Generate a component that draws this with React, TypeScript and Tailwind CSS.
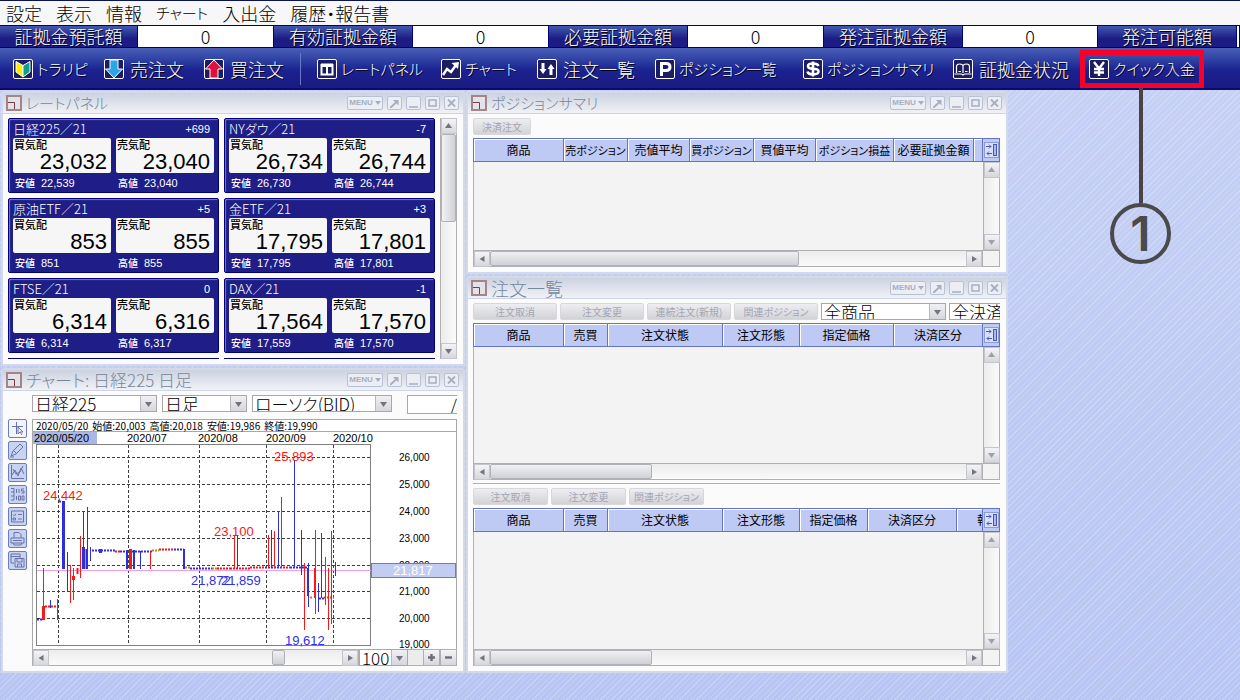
import type { ReactNode } from "react";
import clsx from "clsx";

interface Rate {
  name: string;
  diff: string;
  bid: string;
  ask: string;
  low: string;
  high: string;
}

interface Column {
  label: string;
  width: string;
  small?: boolean;
}

interface Bar {
  x: number;
  y1: number;
  y2: number;
  up: boolean;
  w?: number;
}

const menus = ["設定", "表示", "情報", "チャート", "入出金", "履歴・報告書"];

const balances = [
  { label: "証拠金預託額", value: "0" },
  { label: "有効証拠金額", value: "0" },
  { label: "必要証拠金額", value: "0" },
  { label: "発注証拠金額", value: "0" },
  { label: "発注可能額", value: "" },
];

const rates: Rate[] = [
  { name: "日経225／21", diff: "+699", bid: "23,032", ask: "23,040", low: "22,539", high: "23,040" },
  { name: "NYダウ／21", diff: "-7", bid: "26,734", ask: "26,744", low: "26,730", high: "26,744" },
  { name: "原油ETF／21", diff: "+5", bid: "853", ask: "855", low: "851", high: "855" },
  { name: "金ETF／21", diff: "+3", bid: "17,795", ask: "17,801", low: "17,795", high: "17,801" },
  { name: "FTSE／21", diff: "0", bid: "6,314", ask: "6,316", low: "6,314", high: "6,317" },
  { name: "DAX／21", diff: "-1", bid: "17,564", ask: "17,570", low: "17,559", high: "17,570" },
];

const positionColumns: Column[] = [
  { label: "商品", width: "w-[90px]" },
  { label: "売ポジション", width: "w-16", small: true },
  { label: "売値平均", width: "w-[62px]" },
  { label: "買ポジション", width: "w-16", small: true },
  { label: "買値平均", width: "w-[62px]" },
  { label: "ポジション損益", width: "w-[78px]", small: true },
  { label: "必要証拠金額", width: "w-20" },
  { label: "", width: "w-auto" },
];

const orderColumns: Column[] = [
  { label: "商品", width: "w-[90px]" },
  { label: "売買", width: "w-11" },
  { label: "注文状態", width: "w-[115px]" },
  { label: "注文形態", width: "w-[77px]" },
  { label: "指定価格", width: "w-[94px]" },
  { label: "決済区分", width: "w-auto" },
];

const relatedColumns: Column[] = [
  { label: "商品", width: "w-[90px]" },
  { label: "売買", width: "w-11" },
  { label: "注文状態", width: "w-[115px]" },
  { label: "注文形態", width: "w-[77px]" },
  { label: "指定価格", width: "w-[68px]" },
  { label: "決済区分", width: "w-[89px]" },
  { label: "報", width: "w-auto" },
];

const bars: Bar[] = [
  { x: 43.5, y1: 568, y2: 620, up: true },
  { x: 43.5, y1: 606, y2: 620, up: true, w: 3 },
  { x: 50.5, y1: 600, y2: 608, up: false },
  { x: 57.5, y1: 599, y2: 620, up: true },
  { x: 63.5, y1: 501, y2: 569, up: false, w: 3 },
  { x: 67.5, y1: 552, y2: 592, up: false },
  { x: 70.5, y1: 565, y2: 603, up: true },
  { x: 73.5, y1: 568, y2: 600, up: true },
  { x: 73.5, y1: 576, y2: 580, up: true, w: 3 },
  { x: 77.5, y1: 568, y2: 574, up: true, w: 2 },
  { x: 80.5, y1: 536, y2: 578, up: true },
  { x: 83.5, y1: 511, y2: 569, up: false },
  { x: 83.5, y1: 547, y2: 569, up: false, w: 3 },
  { x: 87.5, y1: 507, y2: 569, up: false },
  { x: 86.5, y1: 549, y2: 569, up: false, w: 2 },
  { x: 90.5, y1: 547, y2: 561, up: false },
  { x: 100.5, y1: 549, y2: 553, up: false, w: 3 },
  { x: 127, y1: 550, y2: 569, up: false, w: 2 },
  { x: 130.5, y1: 549, y2: 569, up: true, w: 3 },
  { x: 134, y1: 550, y2: 569, up: false, w: 2 },
  { x: 140.5, y1: 551, y2: 569, up: false },
  { x: 150.5, y1: 551, y2: 569, up: true },
  { x: 184, y1: 549, y2: 569, up: false, w: 2 },
  { x: 234.5, y1: 536, y2: 569, up: true },
  { x: 237.5, y1: 536, y2: 569, up: false },
  { x: 268.5, y1: 535, y2: 568, up: true },
  { x: 271.5, y1: 530, y2: 568, up: false },
  { x: 274.5, y1: 531, y2: 568, up: true },
  { x: 278.5, y1: 511, y2: 568, up: false },
  { x: 281.5, y1: 497, y2: 568, up: true },
  { x: 294.5, y1: 460, y2: 568, up: false },
  { x: 301.5, y1: 530, y2: 575, up: false },
  { x: 304.5, y1: 563, y2: 630, up: true },
  { x: 308.5, y1: 563, y2: 607, up: false },
  { x: 308, y1: 568, y2: 596, up: false, w: 2 },
  { x: 315.5, y1: 530, y2: 614, up: true },
  { x: 315, y1: 568, y2: 598, up: true, w: 2 },
  { x: 318.5, y1: 583, y2: 612, up: false },
  { x: 321.5, y1: 533, y2: 598, up: false },
  { x: 325.5, y1: 557, y2: 605, up: true },
  { x: 328.5, y1: 568, y2: 630, up: true },
  { x: 331.5, y1: 531, y2: 624, up: true },
  { x: 335.5, y1: 562, y2: 576, up: false },
];

// flat stretches, drawn as rows of short ticks
const flats = [
  { x1: 37, x2: 43, y: 619.5, c: "#2f2fd8" },
  { x1: 45, x2: 58, y: 606.5, c: "#f81818" },
  { x1: 59, x2: 62, y: 501.5, c: "#2f2fd8" },
  { x1: 92, x2: 115, y: 550.5, c: "#2f2fd8" },
  { x1: 115, x2: 120, y: 551.5, c: "#f81818" },
  { x1: 120, x2: 152, y: 551.5, c: "#2f2fd8" },
  { x1: 152, x2: 159, y: 550.5, c: "#b08a10" },
  { x1: 159, x2: 174, y: 549.5, c: "#f81818" },
  { x1: 174, x2: 184, y: 549.5, c: "#2f2fd8" },
  { x1: 185, x2: 190, y: 567.5, c: "#b08a10" },
  { x1: 190, x2: 212, y: 568.5, c: "#2f2fd8" },
  { x1: 212, x2: 219, y: 568.5, c: "#b08a10" },
  { x1: 217, x2: 230, y: 568.5, c: "#f81818" },
  { x1: 230, x2: 250, y: 568.5, c: "#f81818" },
  { x1: 250, x2: 265, y: 567.5, c: "#f81818" },
  { x1: 265, x2: 283, y: 567.5, c: "#2f2fd8" },
  { x1: 283, x2: 290, y: 567.5, c: "#f81818" },
  { x1: 290, x2: 308, y: 567.5, c: "#2f2fd8" },
  { x1: 310, x2: 313, y: 597.5, c: "#b08a10" },
  { x1: 319, x2: 324, y: 598.5, c: "#2f2fd8" },
  { x1: 324, x2: 334, y: 597.5, c: "#f81818" },
];

const gridX = [58.5, 128.5, 199.5, 266.5, 333.5];
const gridY = [457.5, 484.5, 511.5, 538.5, 565.5, 591.5, 618.5];
const prices = ["26,000", "25,000", "24,000", "23,000", "22,000", "21,000", "20,000"];
const months = [
  { x: 127, label: "2020/07" },
  { x: 198, label: "2020/08" },
  { x: 266, label: "2020/09" },
  { x: 333, label: "2020/10" },
];

/* ---------- toolbar ---------- */

const ToolbarIcon = ({ children }: { children: ReactNode }) => (
  <svg width="20" height="20" viewBox="0 0 20 20" className="shrink-0" aria-hidden="true">
    <rect x="0.5" y="0.5" width="19" height="19" rx="1.5" fill="#1c1c60" stroke="#fff" />
    {children}
  </svg>
);

const toolbar: { label: string; width: string; small?: boolean; icon: ReactNode }[] = [
  {
    label: "トラリピ",
    width: "w-[91px]",
    small: true,
    icon: (
      <>
        <path d="M3 2.5 L10 6.5 V18 L3 13 Z" fill="#ffee00" stroke="#fff" />
        <path d="M17 2.5 L10 6.5 V18 L17 13 Z" fill="#0aa08c" stroke="#fff" />
      </>
    ),
  },
  {
    label: "売注文",
    width: "w-[100px]",
    icon: <path d="M6 1 H14 V10 H18.5 L10 19 L1.5 10 H6 Z" fill="#2ca4e8" stroke="#fff" />,
  },
  {
    label: "買注文",
    width: "w-24",
    icon: <path d="M6 19 V10 H1.5 L10 1 L18.5 10 H14 V19 Z" fill="#e0103c" stroke="#fff" />,
  },
  {
    label: "レートパネル",
    width: "w-[124px]",
    small: true,
    icon: <path d="M4 5.5 H16 M4.5 5 V15.500 H15.500 V5 M4 7 H16 M10 7 V15" fill="none" stroke="#fff" strokeWidth="2" />,
  },
  {
    label: "チャート",
    width: "w-24",
    small: true,
    icon: (
      <>
        <path d="M2 16 L6 10 L10 13 L15 6" fill="none" stroke="#fff" strokeWidth="2.5" />
        <path d="M10.5 4 L18 3 L17 10 Z" fill="#fff" />
      </>
    ),
  },
  {
    label: "注文一覧",
    width: "w-[118px]",
    icon: (
      <path
        d="M4.5 4 H7.5 V10 H9.5 L6 15 L2.5 10 H4.5 Z M12.5 16 V10 H10.5 L14 5 L17.5 10 H15.5 V16 Z"
        fill="#fff"
      />
    ),
  },
  {
    label: "ポジション一覧",
    width: "w-[148px]",
    small: true,
    icon: <path d="M6.5 17 V4.5 H11 Q15 4.5 15 8 Q15 11.5 11 11.5 H6.5" fill="none" stroke="#fff" strokeWidth="3" />,
  },
  {
    label: "ポジションサマリ",
    width: "w-[150px]",
    small: true,
    icon: (
      <path
        d="M15.5 7 Q14.5 4.5 10 4.5 Q5 4.5 5 7 Q5 9.5 10 9.8 Q15.5 10 15.5 12.5 Q15.5 15.3 10 15.3 Q5 15.3 4.5 12.5 M10 2.5 V17.5"
        fill="none"
        stroke="#fff"
        strokeWidth="2.6"
      />
    ),
  },
  {
    label: "証拠金状況",
    width: "w-[127px]",
    icon: (
      <path
        d="M3.500 14 V7.500 Q3.500 5 6.500 5 Q10 5 10 7.500 V14 M10 7.500 Q10 5 13.500 5 Q16.500 5 16.500 7.500 V14 M1.500 15 H8.500 L10 16 L11.500 15 H18.500 M5.500 12.500 H8 M12 12.500 H14.500"
        fill="none"
        stroke="#fff"
        strokeWidth="1.2"
      />
    ),
  },
];

const labelShadow = "[text-shadow:1px_1px_0_#000]";

const ToolbarButton = ({ label, width, small, icon }: (typeof toolbar)[number]) => (
  <button
    type="button"
    className={clsx("flex shrink-0 items-center whitespace-nowrap text-white", labelShadow, width, small ? "gap-1 text-[15px]" : "gap-1.5 text-lg")}
  >
    <ToolbarIcon>{icon}</ToolbarIcon>
    {label}
  </button>
);

const Toolbar = () => (
  <nav className="flex h-[42px] items-center border-b-2 border-[#0a0a6a] bg-linear-to-b from-[#4a5fb8] via-[#1c2290] via-55% to-[#1a1a82] pt-0.5 pl-[13px]">
    {toolbar.slice(0, 3).map((item) => (
      <ToolbarButton key={item.label} {...item} />
    ))}
    <span className="mr-4 h-8 w-px shrink-0 bg-[#6878c8]" />
    {toolbar.slice(3).map((item) => (
      <ToolbarButton key={item.label} {...item} />
    ))}
    <div className="relative z-10 h-[38px] w-[124px] shrink-0 border-[5px] border-[#f80028]">
      <button type="button" className={clsx("flex h-full items-center gap-1 pl-1 text-[15px] whitespace-nowrap text-white", labelShadow)}>
        <ToolbarIcon>
          <path d="M5 3 L10 9.500 L15 3 M10 9 V17 M5 10 H15 M5 13.500 H15" fill="none" stroke="#fff" strokeWidth="2.4" />
        </ToolbarIcon>
        クイック入金
      </button>
      {/* numbered callout hanging from the deposit button */}
      <div className="absolute top-full left-[25px] flex flex-col items-center pt-[5px]">
        <span className="h-[115px] w-1 bg-[#4a4245]" />
        <span className="flex size-[61px] items-center justify-center rounded-full border-4 border-[#4a4a4a] font-['Inter',sans-serif] text-5xl font-semibold text-[#4a4a4a]">
          1
        </span>
      </div>
    </div>
  </nav>
);

/* ---------- small controls ---------- */

const arrows = {
  up: "M1 6 L4.500 1 L8 6 Z",
  down: "M1 2 L4.500 7 L8 2 Z",
  left: "M6.500 1 L1.500 4 L6.500 7 Z",
  right: "M2 1 L7 4 L2 7 Z",
};

const ArrowButton = ({ dir, dim }: { dir: keyof typeof arrows; dim?: boolean }) => (
  <button
    type="button"
    aria-label={dir}
    className="flex size-4 shrink-0 items-center justify-center border border-[#c4c6cc] bg-linear-to-b from-[#f4f4f8] to-[#d6d7dc]"
  >
    <svg width="9" height="8" viewBox="0 0 9 8" aria-hidden="true">
      <path d={arrows[dir]} fill={dim ? "#a0a0a8" : "#74747e"} />
    </svg>
  </button>
);

const VScroll = ({ thumb, dim }: { thumb?: string; dim?: boolean }) => (
  <div className="flex h-full w-[17px] shrink-0 flex-col items-center border-x border-[#b0b0b0] bg-linear-to-r from-[#ececec] to-[#fafafa]">
    <ArrowButton dir="up" dim={dim} />
    <div className="min-h-0 w-full flex-1">
      {thumb && <div className={clsx("w-full rounded-xs border border-[#b0b2b8] bg-linear-to-r from-[#f2f2f6] to-[#d0d1d6]", thumb)} />}
    </div>
    <ArrowButton dir="down" dim={dim} />
  </div>
);

const HScroll = ({ thumb }: { thumb: string }) => (
  <div className="flex h-[17px] min-w-0 flex-1 items-center border border-[#b0b0b0] bg-linear-to-b from-[#ececec] to-[#fafafa]">
    <ArrowButton dir="left" />
    <div className="h-full min-w-0 flex-1">
      <div className={clsx("h-full rounded-xs border border-[#b0b2b8] bg-linear-to-b from-[#f0f0f4] to-[#d0d1d6]", thumb)} />
    </div>
    <ArrowButton dir="right" />
  </div>
);

const Dropdown = ({ label, value, width }: { label: string; value: string; width: string }) => (
  <div className={clsx("flex h-[17px] shrink-0 items-center border border-[#a8a8a8] bg-white", width)}>
    <div className="relative flex h-full w-full">
      <select aria-label={label} className="h-full w-full appearance-none pl-0.5 text-[17px] leading-[15px] outline-none">
        <option>{value}</option>
      </select>
      <span className="pointer-events-none absolute inset-y-0 right-0 flex w-4 items-center justify-center border-l border-[#b8bac0] bg-linear-to-b from-[#f0f0f4] to-[#d6d7dc]">
        <svg width="9" height="8" viewBox="0 0 9 8" aria-hidden="true">
          <path d={arrows.down} fill="#74747e" />
        </svg>
      </span>
    </div>
  </div>
);

const ActionButton = ({ label, width }: { label: string; width: string }) => (
  <button
    type="button"
    disabled
    className={clsx(
      "flex h-[17px] shrink-0 items-center justify-center rounded-xs border border-[#d8d8dc] bg-linear-to-b from-[#eeeef2] to-[#d2d3d7] text-[10px] font-normal whitespace-nowrap text-[#a4a5b4]",
      width,
    )}
  >
    {label}
  </button>
);

/* ---------- window frame ---------- */

const frameButton = "flex h-3.5 w-[15px] items-center justify-center rounded-xs border border-[#b8c2d4] bg-[#eceef4]";

const Panel = ({ title, titleSize, children }: { title: string; titleSize: string; children: ReactNode }) => (
  <section className="rounded-t border-2 border-[#d3d9e8] bg-[#fbfbfb]">
    <header className="flex h-[21px] items-center border-b border-[#cdd4e4] bg-linear-to-b from-[#ccd2e0] to-[#f1f2f7] pr-1 pl-[3px]">
      <svg width="16" height="16" viewBox="0 0 16 16" className="mr-1 shrink-0" aria-hidden="true">
        <rect x="1" y="1" width="14" height="14" fill="#e4e2e8" stroke="#a08688" strokeWidth="2" />
        <path d="M2 7.500 H8.500 V14" fill="none" stroke="#7a3c40" />
      </svg>
      <h2 className={clsx("flex-1 leading-5 whitespace-nowrap text-[#76879c]", titleSize)}>{title}</h2>
      <div className="flex gap-1 text-[#a4afc2]">
        <button type="button" className="flex h-3.5 w-9 items-center justify-center gap-0.5 rounded-xs border border-[#b8c2d4] bg-[#eceef4] font-['Liberation_Sans',sans-serif] text-[8px] font-bold">
          MENU
          <svg width="6" height="4" viewBox="0 0 6 4" aria-hidden="true">
            <path d="M0 0 H6 L3 4 Z" fill="currentColor" />
          </svg>
        </button>
        <button type="button" aria-label="切り離す" className={frameButton}>
          <svg width="9" height="9" viewBox="0 0 9 9" aria-hidden="true">
            <path d="M0 9 L6 3.500" stroke="currentColor" strokeWidth="2" />
            <path d="M3 1 H8.500 V6.500 Z" fill="currentColor" />
          </svg>
        </button>
        <button type="button" aria-label="最小化" className={frameButton}>
          <svg width="9" height="9" viewBox="0 0 9 9" aria-hidden="true">
            <path d="M0 8 H9" stroke="currentColor" strokeWidth="1.5" />
          </svg>
        </button>
        <button type="button" aria-label="最大化" className={frameButton}>
          <svg width="9" height="8" viewBox="0 0 9 8" aria-hidden="true">
            <rect x="1" y="1" width="7" height="6" fill="none" stroke="currentColor" strokeWidth="1.5" />
          </svg>
        </button>
        <button type="button" aria-label="閉じる" className={frameButton}>
          <svg width="9" height="8" viewBox="0 0 9 8" aria-hidden="true">
            <path d="M1 0.500 L8 7.500 M8 0.500 L1 7.500" stroke="currentColor" strokeWidth="1.8" />
          </svg>
        </button>
      </div>
    </header>
    <div className="pt-1 pr-1.5 pb-[5px] pl-[5px]">{children}</div>
  </section>
);

/* ---------- rate panel ---------- */

const Quote = ({ label, value, foot, footValue }: { label: string; value: string; foot: string; footValue: string }) => (
  <div className="min-w-0 flex-1">
    <div className="h-[35px] rounded-xs bg-[#f6f6f6] pr-1 pl-px text-black">
      <div className="h-3 text-[11px] leading-3 font-medium">{label}</div>
      <div className="text-right font-['Liberation_Sans',sans-serif] text-[22px] leading-6">{value}</div>
    </div>
    <div className="flex gap-1.5 pt-1 pl-0.5 leading-3">
      <span className="text-[10px] font-medium">{foot}</span>
      <span className="font-['Liberation_Sans',sans-serif] text-[11px]">{footValue}</span>
    </div>
  </div>
);

const RateCard = ({ rate }: { rate: Rate }) => (
  <article className="h-[75px] rounded-xs border border-[#00007c] bg-[#1e1e86] px-1 text-white shadow-[inset_1px_1px_1px_#7c7cb8]">
    <div className="flex h-[19px] items-center justify-between pr-1 leading-4">
      <h3 className="text-[13px]">{rate.name}</h3>
      <span className="font-['Liberation_Sans',sans-serif] text-[11px]">{rate.diff}</span>
    </div>
    <div className="flex gap-[5px]">
      <Quote label="買気配" value={rate.bid} foot="安値" footValue={rate.low} />
      <Quote label="売気配" value={rate.ask} foot="高値" footValue={rate.high} />
    </div>
  </article>
);

const RatePanel = () => (
  <Panel title="レートパネル" titleSize="text-[15px]">
    <div className="flex h-[241px] gap-[5px]">
      <div className="grid min-w-0 flex-1 auto-rows-max grid-cols-2 gap-[5px] overflow-hidden">
        {rates.map((rate) => (
          <RateCard key={rate.name} rate={rate} />
        ))}
        <div className="h-px bg-[#00007c]" />
        <div className="h-px bg-[#00007c]" />
      </div>
      <VScroll thumb="h-[88px]" />
    </div>
  </Panel>
);

/* ---------- chart ---------- */

const Chart = () => (
  <svg viewBox="33 432 423 217" className="block w-full" role="img" aria-label="日経225 日足チャート">
    <rect x="33" y="432" width="64" height="12" fill="#a9b7e6" />
    <g fontFamily="Liberation Sans, sans-serif" fontSize="11">
      <text x="34" y="442">2020/05/20</text>
      {months.map((m) => (
        <text key={m.label} x={m.x} y="442">{m.label}</text>
      ))}
    </g>
    <rect x="36.500" y="444.500" width="334" height="201" fill="#fff" stroke="#808080" />
    <g stroke="#404040" strokeDasharray="3 2">
      {gridY.map((y) => (
        <line key={y} x1="37" x2="370" y1={y} y2={y} />
      ))}
      {gridX.map((x) => (
        <line key={x} x1={x} x2={x} y1="445" y2="645" />
      ))}
    </g>
    <line x1="37" x2="371" y1="570.500" y2="570.500" stroke="#f0a0e8" />
    {flats.map((f) => (
      <line key={f.x1} x1={f.x1} x2={f.x2} y1={f.y} y2={f.y} stroke={f.c} strokeWidth="2" strokeDasharray="2 1" />
    ))}
    {bars.map((b, i) => (
      <line key={i} x1={b.x} x2={b.x} y1={b.y1} y2={b.y2} stroke={b.up ? "#f81818" : "#2f2fd8"} strokeWidth={b.w ?? 1} />
    ))}
    <g fontFamily="Liberation Sans, sans-serif" fontSize="10">
      {prices.map((p, i) => (
        <text key={p} x="399" y={gridY[i] + 3}>{p}</text>
      ))}
      <text x="399" y="648">19,000</text>
    </g>
    <rect x="371.500" y="563.500" width="84" height="14" fill="#c3cdf2" stroke="#6a7cc4" />
    <g fontFamily="Liberation Sans, sans-serif" fontSize="13">
      <text x="393" y="575" fill="#fff">21,817</text>
      <g fill="#f81818">
        <text x="43" y="500">24,442</text>
        <text x="214" y="536">23,100</text>
        <text x="274" y="461">25,893</text>
      </g>
      <g fill="#3030e8">
        <text x="191" y="585">21,872</text>
        <text x="221" y="585">21,859</text>
        <text x="285" y="645">19,612</text>
      </g>
    </g>
  </svg>
);

const chartTools = [
  { label: "カーソル", path: "M4 7.500 H15 M8.500 3 V15 M10 8 V15 L12 13 L14 16 M10 8 L15 13 H12" },
  { label: "描画", path: "M3 15 L5 10 L12 3 L15 6 L8 13 Z M6 10 L9 13 M2 16 H6" },
  { label: "指標", path: "M3.500 2 V15.500 H16 M4 12 L7 7 L10 13 L13 5 L16 11 M5 6 L8 11 L12 9 L15 3" },
  { label: "価格", path: "M3 3.500 H6 V15 H3 M3 7 H6 M3 11 H6 M8.500 4 V8 M11 4 V8 M16 4 H13.500 V6 H16 V8 H13.500 M8.500 11 V15 M10.500 11 H12.500 V15 H10.500 Z M14 11 H16 V15 H14 Z" },
  { label: "設定", path: "M3.500 4 H15.500 V15 H3.500 Z M5 7.500 L6.500 9 L8 6.500 M10 7.500 H14 M5 11 H7.500 V13 H5 Z M10 12 H14" },
  { label: "印刷", path: "M6 9 V3.500 H11 L13 5.500 V9 M3 9 H16 V14 H3 Z M5 14 L6 16 H13 L14 14 M5 11.500 H14" },
  { label: "保存", path: "M3 3 H12 V7 M3 3 V12 H6 M3 5.500 H12 M7 7.500 H16 V16 H7 Z M9 8 V11 H14 V8 M9.500 16 V13 H13.500 V16" },
];

const ChartPanel = () => (
  <Panel title="チャート: 日経225 日足" titleSize="text-[17px]">
    <div className="flex items-start gap-[5px] pl-6">
      <Dropdown label="商品" value="日経225" width="w-[125px]" />
      <Dropdown label="足種" value="日足" width="w-[85px]" />
      <Dropdown label="チャート種類" value="ローソク(BID)" width="w-[140px]" />
      <input
        aria-label="日付"
        defaultValue="/"
        className="ml-2.5 h-[19px] w-12 min-w-0 flex-1 border border-r-0 border-[#a8a8a8] bg-white text-right text-[17px] leading-4 outline-none"
      />
    </div>
    <div className="flex gap-[5px] pt-[5px]">
      <div className="flex flex-col gap-[3px]">
        {chartTools.map((tool, i) => (
          <button
            key={tool.label}
            type="button"
            aria-label={tool.label}
            className={clsx("size-[19px] rounded-xs border border-[#6c7cc4]", i === 0 ? "bg-[#f4f5fa]" : "bg-[#c8d2f2]")}
          >
            <svg width="17" height="17" viewBox="1 1 17 17" aria-hidden="true">
              <path d={tool.path} fill="none" stroke="#6874a8" />
            </svg>
          </button>
        ))}
      </div>
      <div className="min-w-0 flex-1">
        <div className="border border-b-0 border-[#a8a8a8] bg-white">
          <p className="flex h-3 gap-1 border-b border-[#a8a8a8] pl-[3px] text-[10px] leading-[11px] font-normal whitespace-nowrap">
            <span>2020/05/20</span>
            <span>始値:20,003</span>
            <span>高値:20,018</span>
            <span>安値:19,986</span>
            <span>終値:19,990</span>
          </p>
          <Chart />
        </div>
        <div className="flex h-[17px]">
          <HScroll thumb="ml-[76%] w-[13px]" />
          <Dropdown label="本数" value="100" width="w-[49px]" />
          <span className="w-[15px] border-y border-[#b0b0b0] bg-[#ececec]" />
          <button type="button" aria-label="拡大" className="flex w-[17px] items-center justify-center border border-[#b0b0b0] bg-linear-to-b from-[#f4f4f8] to-[#d6d7dc]">
            <svg width="7" height="7" viewBox="0 0 7 7" aria-hidden="true">
              <path d="M3.500 0 V7 M0 3.500 H7" stroke="#6c6c78" strokeWidth="2.4" />
            </svg>
          </button>
          <button type="button" aria-label="縮小" className="flex w-[17px] items-center justify-center border border-[#b0b0b0] bg-linear-to-b from-[#f4f4f8] to-[#d6d7dc]">
            <svg width="7" height="7" viewBox="0 0 7 7" aria-hidden="true">
              <path d="M0 3.500 H7" stroke="#6c6c78" strokeWidth="2.4" />
            </svg>
          </button>
        </div>
      </div>
    </div>
  </Panel>
);

/* ---------- order tables ---------- */

const DataTable = ({ columns, height, thumb, label }: { columns: Column[]; height: string; thumb: string; label: string }) => (
  <div className="grid grid-cols-[minmax(0,1fr)_17px] bg-[#f3f3f3]">
    <table aria-label={label} className="h-6 w-full table-fixed border-collapse border border-[#6474c4] bg-[#bec9f4]">
      <thead>
        <tr>
          {columns.map((col, i) => (
            <th
              key={i}
              scope="col"
              className={clsx(
                "border border-[#6474c4] p-0 leading-5 font-normal whitespace-nowrap shadow-[inset_1px_1px_0_#fff]",
                col.width,
                col.small ? "text-[11px]" : "text-xs",
                col.label === "報" && "overflow-hidden pl-5 text-left",
              )}
            >
              {col.label}
            </th>
          ))}
        </tr>
      </thead>
    </table>
    <button type="button" aria-label="列の設定" className="flex h-6 items-center justify-center border border-l-0 border-[#6474c4] bg-[#bec9f4]">
      <svg width="15" height="16" viewBox="0 0 15 16" aria-hidden="true">
        <rect x="0.500" y="0.500" width="14" height="15" fill="#d8e0fa" stroke="#8c9ad8" />
        <path d="M2 4.500 H7 M5 2.500 L7 4.500 L5 6.500 M8 11.500 H3 M5 9.500 L3 11.500 L5 13.500" fill="none" stroke="#4858b8" />
        <rect x="9.500" y="2.500" width="3" height="11" fill="#aab8ec" stroke="#4858b8" />
      </svg>
    </button>
    <div className={clsx("border-l border-[#b0b0b0]", height)} />
    <VScroll dim />
    <div className="flex">
      <HScroll thumb={thumb} />
    </div>
    <div className="border border-l-0 border-[#b0b0b0]" />
  </div>
);

const PositionPanel = () => (
  <Panel title="ポジションサマリ" titleSize="text-[15px]">
    <div className="pb-[3px]">
      <ActionButton label="決済注文" width="w-[58px]" />
    </div>
    <DataTable label="ポジションサマリ" columns={positionColumns} height="h-[88px]" thumb="w-[65%]" />
  </Panel>
);

const OrderPanel = () => (
  <Panel title="注文一覧" titleSize="text-lg">
    <div className="flex gap-[3px] overflow-hidden pb-[3px]">
      <ActionButton label="注文取消" width="w-[84px]" />
      <ActionButton label="注文変更" width="w-[84px]" />
      <ActionButton label="連続注文(新規)" width="w-[84px]" />
      <ActionButton label="関連ポジション" width="w-[84px]" />
      <Dropdown label="商品" value="全商品" width="w-[125px]" />
      <Dropdown label="決済区分" value="全決済" width="w-[125px]" />
    </div>
    <DataTable label="注文一覧" columns={orderColumns} height="h-[116px]" thumb="w-[34%]" />
    <div className="mt-[3px] flex gap-[3px] border-t border-[#b0b0b0] pt-1 pb-[3px]">
      <ActionButton label="注文取消" width="w-[75px]" />
      <ActionButton label="注文変更" width="w-[75px]" />
      <ActionButton label="関連ポジション" width="w-[75px]" />
    </div>
    <DataTable label="関連注文" columns={relatedColumns} height="h-[117px]" thumb="w-[34%]" />
  </Panel>
);

export default function App() {
  return (
    <div className="flex min-h-screen flex-col overflow-x-hidden bg-[repeating-linear-gradient(135deg,#ffffff00_0px,#ffffff00_3px,#ffffff38_3px,#ffffff38_4px),linear-gradient(#c8d2f6,#b8c4f2)] font-['Noto_Sans_CJK_JP',sans-serif] font-light text-black [font-feature-settings:'palt']">
      <div className="flex h-[25px] items-center gap-3.5 border-t border-[#0a1450] bg-[#f7f7f7] pl-1.5 leading-6">
        {menus.map((menu) => (
          <button key={menu} type="button" className={menu === "チャート" ? "text-[15px]" : "text-lg"}>
            {menu}
          </button>
        ))}
      </div>

      <dl className="grid h-[23px] grid-cols-[138fr_136fr_139fr_136fr_139fr_136fr_139fr_135fr_139fr_3fr] border-y border-[#00007c] text-center text-lg leading-[21px]">
        {balances.map((item) => (
          <div key={item.label} className="contents">
            <dt className={clsx("border-r border-[#00007c] bg-linear-to-b from-[#4458b0] to-[#1c1c84] to-60% whitespace-nowrap text-white", labelShadow)}>
              {item.label}
            </dt>
            <dd className="border-r border-[#00007c] bg-white">{item.value}</dd>
          </div>
        ))}
      </dl>

      <Toolbar />

      <main className="grid grid-cols-[465fr_543fr_232fr] items-start pt-px">
        <div className="flex min-w-0 flex-col gap-0.5 pl-px">
          <RatePanel />
          <ChartPanel />
        </div>
        <div className="flex min-w-0 flex-col gap-0.5 pl-px">
          <PositionPanel />
          <OrderPanel />
        </div>
      </main>
    </div>
  );
}
